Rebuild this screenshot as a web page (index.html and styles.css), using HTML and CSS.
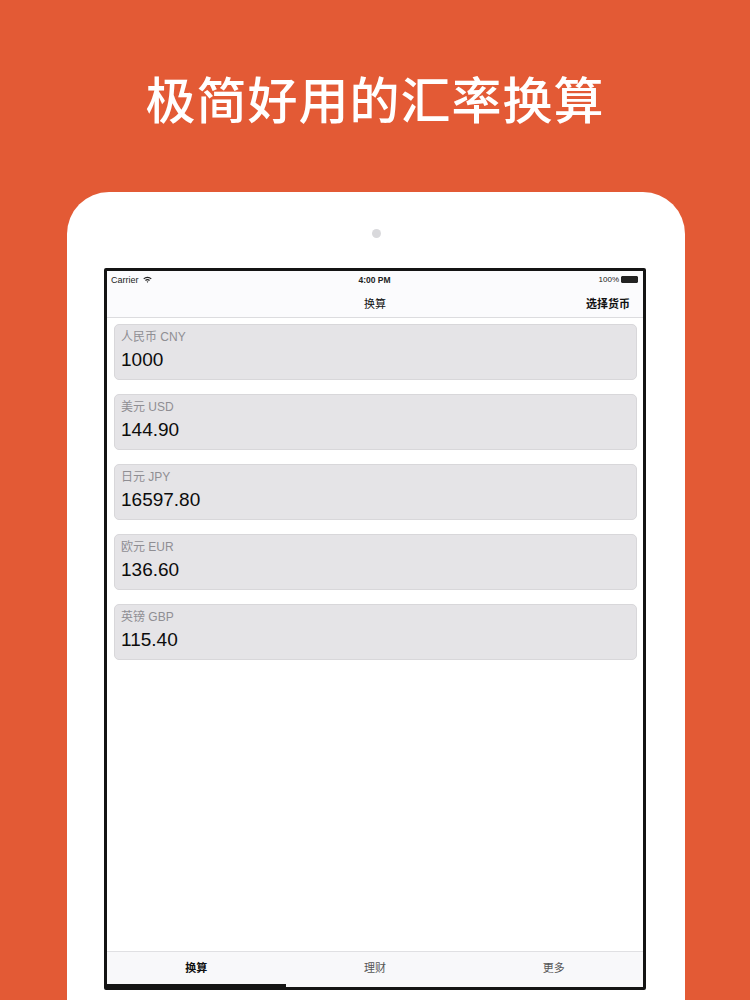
FILE: index.html
```html
<!DOCTYPE html>
<html lang="zh-CN">

<head>
    <meta charset="UTF-8">
    <meta name="viewport" content="width=device-width, initial-scale=1.0">
    <title>汇率换算</title>
    <link rel="stylesheet" href="styles.css">
</head>

<body>

    <!-- Headline -->
    <h1 class="headline">极简好用的汇率换算</h1>

    <!-- Tablet frame -->
    <div class="tablet">
        <div class="camera"></div>

        <div class="screen">
            <div class="status-bar">
                <div class="status-left">
                    Carrier
                    <svg class="wifi" width="9" height="7" viewBox="0 0 9 7">
                        <path d="M0.3 2.4 A6 6 0 0 1 8.7 2.4 L7.8 3.3 A4.7 4.7 0 0 0 1.2 3.3 Z" fill="#222"/>
                        <path d="M2 4.1 A3.6 3.6 0 0 1 7 4.1 L6.1 5 A2.3 2.3 0 0 0 2.9 5 Z" fill="#222"/>
                        <path d="M3.6 5.7 A1.3 1.3 0 0 1 5.4 5.7 L4.5 6.7 Z" fill="#222"/>
                    </svg>
                </div>
                <div class="status-time">4:00 PM</div>
                <div class="status-right">
                    100%
                    <span class="battery"><span class="battery-level"></span></span>
                </div>
            </div>

            <div class="nav-bar">
                <span class="nav-title">换算</span>
                <span class="nav-action">选择货币</span>
            </div>

            <div class="content">
                <div class="card">
                    <div class="card-label">人民币 CNY</div>
                    <div class="card-value">1000</div>
                </div>
                <div class="card">
                    <div class="card-label">美元 USD</div>
                    <div class="card-value">144.90</div>
                </div>
                <div class="card">
                    <div class="card-label">日元 JPY</div>
                    <div class="card-value">16597.80</div>
                </div>
                <div class="card">
                    <div class="card-label">欧元 EUR</div>
                    <div class="card-value">136.60</div>
                </div>
                <div class="card">
                    <div class="card-label">英镑 GBP</div>
                    <div class="card-value">115.40</div>
                </div>
            </div>

            <div class="tab-bar">
                <div class="tab active">换算</div>
                <div class="tab">理财</div>
                <div class="tab">更多</div>
            </div>
        </div>
    </div>

</body>

</html>
```

FILE: styles.css
```css
/*--------------Page-------------*/
body {
    margin: 0;
    height: 1000px;
    overflow: hidden;
    background-color: #e35a35;
    font-family: "Liberation Sans", "Noto Sans CJK SC", sans-serif;
}

.headline {
    margin: 0;
    height: 192px;
    padding-top: 67px;
    box-sizing: border-box;
    text-align: center;
    color: #fff;
    font-family: "Noto Sans CJK SC", sans-serif;
    font-size: 50px;
    font-weight: 500;
    line-height: 60px;
    letter-spacing: 1px;
}

/*--------------Tablet-------------*/
.tablet {
    margin-left: 67px;
    width: 618px;
    height: 830px;
    background-color: #fff;
    border-radius: 42px 42px 0 0;
    padding-top: 37px;
    box-sizing: border-box;
}

.camera {
    width: 9px;
    height: 9px;
    margin: 0 auto;
    border-radius: 50%;
    background-color: #d9d9dc;
}

.screen {
    margin: 30px 0 0 37px;
    width: 542px;
    height: 722px;
    border: 3px solid #141414;
    border-radius: 2px;
    box-sizing: border-box;
    display: flex;
    flex-direction: column;
    background-color: #fff;
}

/* Status bar */
.status-bar {
    height: 17px;
    padding: 0 5px 0 4px;
    display: flex;
    align-items: center;
    justify-content: space-between;
    font-size: 9px;
    color: #222;
    background-color: #fbfbfd;
}

.status-left {
    display: flex;
    align-items: center;
    gap: 4px;
    width: 90px;
}

.status-time {
    font-weight: 600;
    font-size: 8.5px;
}

.status-right {
    display: flex;
    align-items: center;
    justify-content: flex-end;
    gap: 2px;
    width: 90px;
    font-size: 8px;
}

.battery {
    display: inline-block;
    width: 15px;
    height: 5px;
    border: 1px solid #222;
    border-radius: 1px;
}

.battery-level {
    display: block;
    width: 100%;
    height: 100%;
    background-color: #222;
}

/* Nav bar */
.nav-bar {
    height: 29px;
    position: relative;
    display: flex;
    align-items: center;
    justify-content: flex-end;
    padding-right: 13px;
    border-bottom: 1px solid #dcdcdf;
    background-color: #fbfbfd;
    font-size: 11px;
    color: #111;
}

.nav-title {
    position: absolute;
    left: 0;
    right: 0;
    text-align: center;
}

.nav-action {
    position: relative;
    font-weight: bold;
}

/* Currency cards */
.content {
    flex: 1;
    padding: 6px 6px 0 7px;
    display: flex;
    flex-direction: column;
    gap: 14px;
}

.card {
    height: 56px;
    box-sizing: border-box;
    padding: 5px 6px 0;
    background-color: #e5e4e7;
    border: 1px solid #d8d7da;
    border-radius: 5px;
}

.card-label {
    font-size: 12px;
    line-height: 15px;
    color: #8f8e93;
}

.card-value {
    margin-top: 4px;
    font-size: 19px;
    line-height: 22px;
    color: #0c0c0c;
}

/* Tab bar */
.tab-bar {
    height: 35px;
    display: flex;
    border-top: 1px solid #e0e0e3;
    background-color: #f8f8fa;
}

.tab {
    flex: 1;
    display: flex;
    align-items: center;
    justify-content: center;
    font-size: 11px;
    color: #555;
    border-bottom: 3px solid transparent;
    padding-bottom: 2px;
}

.tab.active {
    color: #111;
    font-weight: bold;
    border-bottom-color: #141414;
}
```
